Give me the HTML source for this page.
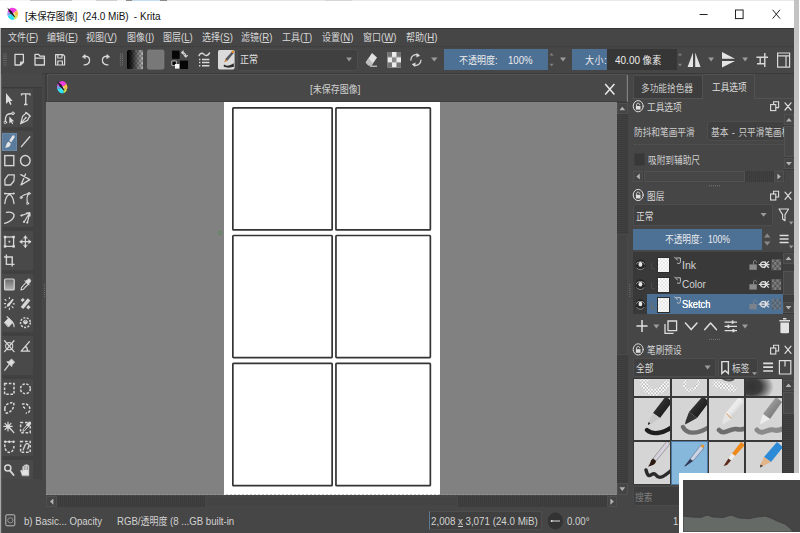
<!DOCTYPE html>
<html lang="zh-CN">
<head>
<meta charset="utf-8">
<title>[未保存图像] (24.0 MiB) - Krita</title>
<style>
*{box-sizing:border-box;margin:0;padding:0}
html,body{width:800px;height:533px;overflow:hidden;background:#fff}
body{font-family:"Liberation Sans","Noto Sans CJK SC",sans-serif;font-size:10px;color:#d2d2d2;position:relative;line-height:1}
.a{position:absolute}
.t{position:absolute;white-space:nowrap;line-height:12px;height:12px;font-size:10px;transform:scaleX(.9);transform-origin:0 0}
svg{position:absolute;overflow:visible}
#ic{left:0;top:0;pointer-events:none}
.l{font-size:107%}
.sl{background:#4d7095}
.combo{background:#404040;border:1px solid #4d4d4d;border-radius:2px}
.d{font-size:9.8px;transform:scaleX(.885);color:#cecece}
.m{top:31px;color:#d8d8d8}
.m u,.st u{text-decoration-thickness:1px;text-underline-offset:1px}
.sbv{background:#3d3d3d}
.sbb{background:#454545;border:1px solid #505050}
.sbt{background:#474747;border:1px solid #525252}
.th{width:13.4px;height:16px;background:#fff;border:1px solid #2c2c2c;background-image:conic-gradient(#e2e2e2 25%,#fff 0 50%,#e2e2e2 0 75%,#fff 0);background-size:3.4px 3.8px}
.ln{font-size:11px;color:#d2d2d2;transform:scaleX(.85)}
.bc{background:#d5d5d5}
.pn{border:1.3px solid #2a2a2a;border-radius:1.5px}
.tg{left:2px;width:31px;background:#494949}
</style>
</head>
<body>
<!-- window background -->
<div class="a" style="left:0;top:0;width:2px;height:533px;background:#a8a8a8"></div>
<div class="a" style="left:1px;top:0;width:794px;height:533px;background:#464646;border-left:1px solid #585858"></div>
<div class="a" style="left:0;top:0;width:800px;height:1px;background:linear-gradient(90deg,#f6f6f6 0 30px,#c4c4c4 30px 72px,#f4f4f4 72px 96px,#cfcfcf 96px 117px,#f4f4f4 117px 126px,#8a8a8a 126px 132px,#c4dcf2 132px 160px,#8a8a8a 160px 167px,#e6e6e6 167px 325px,#d6d6d6 325px 352px,#e8e8e8 352px)"></div>

<!-- TITLE BAR -->
<div class="a" id="title" style="left:0;top:1px;width:795px;height:27px;background:#fff"></div>
<div class="t" style="left:25px;top:9.7px;font-size:10.4px;color:#111"><span class="l">[</span>未保存图像<span class="l">]</span>&nbsp; <span class="l">(24.0 MiB)</span>&nbsp; <span class="l">- Krita</span></div>

<!-- MENU BAR -->
<div class="a" id="menu" style="left:1px;top:28px;width:794px;height:19px;background:#464646;border-top:1px solid #363636"></div>
<div class="t m" style="left:8px">文件<span class="l">(</span><u><span class="l">F</span></u><span class="l">)</span></div>
<div class="t m" style="left:47px">编辑<span class="l">(</span><u><span class="l">E</span></u><span class="l">)</span></div>
<div class="t m" style="left:86px">视图<span class="l">(</span><u><span class="l">V</span></u><span class="l">)</span></div>
<div class="t m" style="left:127px">图像<span class="l">(</span><u><span class="l">I</span></u><span class="l">)</span></div>
<div class="t m" style="left:163px">图层<span class="l">(</span><u><span class="l">L</span></u><span class="l">)</span></div>
<div class="t m" style="left:202px">选择<span class="l">(</span><u><span class="l">S</span></u><span class="l">)</span></div>
<div class="t m" style="left:241px">滤镜<span class="l">(</span><u><span class="l">R</span></u><span class="l">)</span></div>
<div class="t m" style="left:282px">工具<span class="l">(</span><u><span class="l">T</span></u><span class="l">)</span></div>
<div class="t m" style="left:322px">设置<span class="l">(</span><u><span class="l">N</span></u><span class="l">)</span></div>
<div class="t m" style="left:363px">窗口<span class="l">(</span><u><span class="l">W</span></u><span class="l">)</span></div>
<div class="t m" style="left:406px">帮助<span class="l">(</span><u><span class="l">H</span></u><span class="l">)</span></div>

<!-- TOOLBAR -->
<div class="a" id="tb" style="left:1px;top:46px;width:794px;height:28px;background:#464646;border-top:1px dotted #383838;border-bottom:1px solid #3b3b3b"></div>
<div class="a combo" style="left:237px;top:49px;width:121px;height:22px"></div>
<div class="t" style="left:240px;top:54px;color:#e0e0e0">正常</div>
<div class="a sl" style="left:444px;top:49px;width:104px;height:21px"></div>
<div class="t" style="left:458.5px;top:54px;color:#ececec">不透明度<span class="l">:</span></div>
<div class="t" style="left:507.5px;top:54px;color:#ececec"><span class="l">100%</span></div>
<div class="a" style="left:572px;top:49px;width:105px;height:21px;background:#363636"></div>
<div class="a sl" style="left:572px;top:49px;width:35px;height:21px"></div>
<div class="t" style="left:585px;top:54px;color:#ececec;letter-spacing:.5px">大小<span class="l">:</span></div>
<div class="t" style="left:615.2px;top:54px;color:#ececec;transform:scaleX(.935)"><span class="l">40.00</span> 像素</div>

<!-- TOOLBOX -->
<div class="a" style="left:2px;top:73px;width:40px;height:15px;background:#484848;border-bottom:1px solid #3a3a3a"></div>
<div class="a" style="left:2px;top:88px;width:40px;height:391px;background:#414141"></div>
<div class="a tg" style="top:89px;height:38px"></div>
<div class="a tg" style="top:131px;height:96px"></div>
<div class="a tg" style="top:231px;height:39px"></div>
<div class="a tg" style="top:274px;height:58px"></div>
<div class="a tg" style="top:336px;height:39px"></div>
<div class="a tg" style="top:379px;height:77px"></div>
<div class="a tg" style="top:460px;height:19px"></div>
<div class="a" style="left:2px;top:133px;width:15px;height:18px;background:#5a7b9c;border:1px solid #6888a8"></div>

<!-- CANVAS -->
<div class="a" id="canvas" style="left:46px;top:75px;width:582px;height:432px;background:#818181"></div>
<div class="a" style="left:45.4px;top:74px;width:2px;height:28px;background:#3d3d3d"></div>
<div class="a" style="left:46.6px;top:74px;width:580px;height:28px;background:#484848;border-radius:3px 0 0 0;border:1px solid #535353;border-bottom:1px solid #3e3e3e"></div>
<div class="t" style="left:309.6px;top:82.6px;color:#d0d0d0"><span class="l">[</span>未保存图像<span class="l">]</span></div>
<div class="a" id="doc" style="left:224px;top:102px;width:216px;height:393px;background:#fff"></div>
<!-- comic panels -->
<!-- canvas scrollbars -->
<div class="a sbv" id="vs" style="left:617px;top:102px;width:10.6px;height:393px;background:repeating-linear-gradient(0deg,#3b3b3b 0 1px,#404040 1px 2px)"></div>
<div class="a" style="left:617px;top:233.5px;width:10.6px;height:121px;background:#434343;border:1px solid #494949"></div>
<div class="a sbb" style="left:617px;top:102.6px;width:10.6px;height:11.4px"></div>
<div class="a sbb" style="left:617px;top:483.4px;width:10.6px;height:11.2px"></div>
<div class="a" style="left:46px;top:495px;width:582px;height:13px;background:#464646"></div>
<div class="a sbv" id="hs" style="left:46px;top:496px;width:571px;height:11px;background:repeating-linear-gradient(90deg,#3b3b3b 0 1px,#404040 1px 2px)"></div>
<div class="a sbb" style="left:46px;top:496px;width:11px;height:11px"></div>
<div class="a" style="left:205px;top:496px;width:252.5px;height:11px;background:#444;border:1px solid #474747"></div>
<div class="a sbb" style="left:607px;top:496px;width:10px;height:11px"></div>

<!-- STATUS -->
<div class="t st" style="left:24px;top:515.4px"><span class="l">b) Basic... Opacity</span></div>
<div class="t st" style="left:117px;top:515.4px"><span class="l">RGB/</span>透明度 <span class="l">(8 ...GB built-in</span></div>
<div class="a" style="left:429px;top:510.6px;width:113px;height:19.6px;background:#404040;border:1px solid #4e4e4e;border-left-color:#5d7894"></div>
<div class="t st" style="left:431px;top:515.4px;transform:scaleX(.915)"><span class="l">2,008</span> <u><span class="l">x</span></u> <span class="l">3,071 (24.0 MiB)</span></div>
<div class="t st" style="left:567px;top:515.4px"><span class="l">0.00°</span></div>
<div class="t st" style="left:673px;top:515.4px;letter-spacing:1.5px"><span class="l">100%</span></div>
<!-- RIGHT DOCK -->
<div class="a" style="left:633px;top:75px;width:70px;height:23px;background:#3d3d3d;border:1px solid #4e4e4e;border-bottom:none;border-radius:2px 2px 0 0"></div>
<div class="a" style="left:702px;top:74px;width:53px;height:25px;background:#454545;border:1px solid #525252;border-bottom:none;border-radius:2px 2px 0 0"></div>
<div class="a" style="left:632px;top:98px;width:71px;height:1px;background:#525252"></div>
<div class="a" style="left:755px;top:98px;width:40px;height:1px;background:#525252"></div>
<div class="t d" style="left:641px;top:83px;color:#c8c8c8">多功能拾色器</div>
<div class="t d" style="left:712.2px;top:82px;color:#dedede">工具选项</div>
<div class="t d" style="left:647.2px;top:102.2px;color:#d6d6d6">工具选项</div>
<div class="t d" style="left:634.2px;top:126.5px">防抖和笔画平滑</div>
<div class="a combo" style="left:707.4px;top:121px;width:77.4px;height:20px;overflow:hidden;border-radius:3px"><div class="t d" style="left:2.2px;top:4.6px;word-spacing:1.2px">基本 <span class="l">-</span> 只平滑笔画棱角</div></div>
<div class="a" style="left:634px;top:143.6px;width:150px;height:0;border-top:1px dotted #545454"></div>
<div class="a" style="left:634px;top:153px;width:11px;height:13px;background:#383838;border:1px solid #3f3f3f"></div>
<div class="t d" style="left:648.4px;top:155.2px">吸附到辅助尺</div>
<!-- tool options scrollbars -->
<div class="a sbv" style="left:784.4px;top:114px;width:10px;height:56px;background:repeating-linear-gradient(0deg,#3b3b3b 0 1px,#404040 1px 2px)"></div>
<div class="a sbb" style="left:784px;top:114px;width:10px;height:11px"></div>
<div class="a sbt" style="left:784px;top:126px;width:10px;height:31px"></div>
<div class="a sbb" style="left:784px;top:158px;width:10px;height:11px"></div>
<div class="a sbv" style="left:633px;top:171px;width:152px;height:11px;background:repeating-linear-gradient(90deg,#3b3b3b 0 1px,#404040 1px 2px)"></div>
<div class="a sbb" style="left:633px;top:171px;width:10px;height:11px"></div>
<div class="a sbt" style="left:644px;top:171px;width:101px;height:11px"></div>
<div class="a sbb" style="left:774px;top:171px;width:10px;height:11px"></div>

<!-- LAYERS -->
<div class="t d" style="left:646.6px;top:191.4px;color:#d6d6d6">图层</div>
<div class="a combo" style="left:633px;top:204px;width:140px;height:22px"></div>
<div class="t d" style="left:635.8px;top:210.6px;color:#dadada">正常</div>
<div class="a sl" style="left:633px;top:229px;width:129px;height:21px"></div>
<div class="t d" style="left:665px;top:234px;color:#ececec">不透明度<span class="l">:</span></div>
<div class="t d" style="left:707.8px;top:234px;color:#ececec;transform:scaleX(.82)"><span class="l">100%</span></div>
<div class="a" style="left:633px;top:252px;width:150px;height:62px;background:#393939"></div>
<div class="a" style="left:647px;top:294px;width:136px;height:20px;background:#4d7095"></div>
<div class="a th" style="left:657px;top:257px"></div>
<div class="a th" style="left:657px;top:277px"></div>
<div class="a th" style="left:657px;top:297px"></div>
<div class="t ln" style="left:682.2px;top:258.6px;transform:scaleX(.9)"><span class="l">Ink</span></div>
<div class="t ln" style="left:682.2px;top:278.4px"><span class="l">Color</span></div>
<div class="t ln" style="left:682.2px;top:298.2px;color:#fff;text-shadow:0 0 .5px #fff;transform:scaleX(.79)"><span class="l">Sketch</span></div>
<div class="a sbv" style="left:783px;top:252px;width:11.4px;height:62px;background:repeating-linear-gradient(0deg,#3b3b3b 0 1px,#404040 1px 2px)"></div>
<div class="a sbb" style="left:783px;top:253px;width:11px;height:11px"></div>
<div class="a sbt" style="left:783px;top:271px;width:11px;height:24px"></div>
<div class="a sbb" style="left:783px;top:302px;width:11px;height:11px"></div>

<!-- BRUSH PRESETS -->
<div class="t d" style="left:646.6px;top:345px;color:#d6d6d6">笔刷预设</div>
<div class="a combo" style="left:633px;top:358px;width:83px;height:19px"></div>
<div class="t d" style="left:635.8px;top:362.6px;color:#dadada">全部</div>
<div class="a combo" style="left:718px;top:358px;width:40px;height:19px"></div>
<div class="t d" style="left:732.2px;top:362.6px;color:#dadada">标签</div>
<div class="a" style="left:633px;top:378px;width:150px;height:107px;background:#383838"></div>
<div class="a bc" style="left:634px;top:379px;width:36px;height:17px"></div>
<div class="a bc" style="left:672px;top:379px;width:35px;height:17px"></div>
<div class="a bc" style="left:709px;top:379px;width:35px;height:17px"></div>
<div class="a bc" style="left:746px;top:379px;width:36px;height:17px"></div>
<div class="a bc" style="left:634px;top:398px;width:36px;height:42px"></div>
<div class="a bc" style="left:672px;top:398px;width:35px;height:42px"></div>
<div class="a bc" style="left:709px;top:398px;width:35px;height:42px"></div>
<div class="a bc" style="left:746px;top:398px;width:36px;height:42px"></div>
<div class="a bc" style="left:634px;top:442px;width:36px;height:42px"></div>
<div class="a bc" style="left:671px;top:441px;width:37px;height:44px;background:#86b8dc;border:1px solid #4f79a0"></div>
<div class="a bc" style="left:709px;top:442px;width:35px;height:42px"></div>
<div class="a bc" style="left:746px;top:442px;width:36px;height:42px"></div>
<div class="a sbv" style="left:782.6px;top:379px;width:11.8px;height:106px;background:repeating-linear-gradient(0deg,#3b3b3b 0 1px,#404040 1px 2px)"></div>
<div class="a sbb" style="left:783px;top:380px;width:11px;height:11px"></div>
<div class="a sbt" style="left:783px;top:392px;width:11px;height:22px"></div>
<div class="a" style="left:633px;top:486px;width:150px;height:20px;background:#3e3e3e;border:1px solid #4a4a4a;border-radius:2px"></div>
<div class="t d" style="left:634.8px;top:491.6px;color:#7e7e7e">搜索</div>
<svg id="ic" width="800" height="533" viewBox="0 0 800 533" fill="none">
<!-- TITLE + CANVAS ICONS -->
<g id="misc">
  <!-- comic panels -->
  <g fill="#fff" stroke="#343434" stroke-width="1.7">
    <rect x="232.85" y="107.85" width="99.3" height="122.05" rx="0.7"/>
    <rect x="335.95" y="107.85" width="94.4" height="122.05" rx="0.7"/>
    <rect x="232.85" y="235.5" width="99.3" height="122.05" rx="0.7"/>
    <rect x="335.95" y="235.5" width="94.4" height="122.05" rx="0.7"/>
    <rect x="232.85" y="363.3" width="99.3" height="122.3" rx="0.7"/>
    <rect x="335.95" y="363.3" width="94.4" height="122.3" rx="0.7"/>
  </g>
  <g id="krita-logo">
    <path d="M12.70 13.80 L7.48 12.22 A5.4 6.1 0 0 1 17.12 10.30 Z" fill="#ee3be0"/>
    <path d="M12.70 13.80 L17.12 10.30 A5.4 6.1 0 0 1 17.59 16.38 Z" fill="#f7bd48"/>
    <path d="M12.70 13.80 L17.59 16.38 A5.4 6.1 0 0 1 14.55 19.53 Z" fill="#cfe94a"/>
    <path d="M12.70 13.80 L14.55 19.53 A5.4 6.1 0 0 1 7.63 15.89 Z" fill="#2fe3ee"/>
    <path d="M12.70 13.80 L7.63 15.89 A5.4 6.1 0 0 1 7.48 12.22 Z" fill="#7f9ff0"/>
    <ellipse cx="13.30" cy="14.60" rx="1.6" ry="1.8" fill="#fff" opacity="0.55"/>
    <path d="M7.10 7.40 L11.70 11.20 L15.30 17.20 L13.90 16.80 L10.30 13.20 Z" fill="#1c1c28"/>
  </g>
  <g id="krita-logo2">
    <path d="M62.20 87.20 L57.18 85.62 A5.2 6.1 0 0 1 66.46 83.70 Z" fill="#ee3be0"/>
    <path d="M62.20 87.20 L66.46 83.70 A5.2 6.1 0 0 1 66.91 89.78 Z" fill="#f7bd48"/>
    <path d="M62.20 87.20 L66.91 89.78 A5.2 6.1 0 0 1 63.98 92.93 Z" fill="#cfe94a"/>
    <path d="M62.20 87.20 L63.98 92.93 A5.2 6.1 0 0 1 57.31 89.29 Z" fill="#2fe3ee"/>
    <path d="M62.20 87.20 L57.31 89.29 A5.2 6.1 0 0 1 57.18 85.62 Z" fill="#7f9ff0"/>
    <ellipse cx="62.80" cy="88.00" rx="1.6" ry="1.8" fill="#fff" opacity="0.55"/>
    <path d="M56.60 80.80 L61.20 84.60 L64.80 90.60 L63.40 90.20 L59.80 86.60 Z" fill="#1c1c28"/>
  </g>
  <g stroke="#222" stroke-width="1" fill="none">
    <path d="M699.6 14.5 H707.6"/><rect x="735.5" y="10" width="7.6" height="8.6"/><path d="M772.6 9.8 L780 18.6 M780 9.8 L772.6 18.6"/>
  </g>
  <path d="M605.2 84 L614.4 94.4 M614.4 84 L605.2 94.4" stroke="#eaeaea" stroke-width="1.5" fill="none"/>
  <g fill="#b4b4b4" stroke="none">
    <path d="M619.4 110.2 L622.3 106.8 L625.2 110.2 Z"/>
    <path d="M619.4 487.2 L622.3 491 L625.2 487.2 Z"/>
    <path d="M53.4 498.4 L50 501.6 L53.4 504.8 Z"/>
    <path d="M610.4 498.4 L613.8 501.6 L610.4 504.8 Z"/>
  </g>
  <!-- dock splitter grips -->
  <path d="M44.6 284 V298" stroke="#707070" stroke-width="1" stroke-dasharray="1 1" fill="none"/>
  <path d="M629.8 284 V298" stroke="#707070" stroke-width="1" stroke-dasharray="1 1" fill="none"/>
  <!-- toolbox separators -->
  <path d="M5.5 129.4 H29.5 M5.5 229.4 H29.5 M5.5 272.4 H29.5 M5.5 334.4 H29.5 M5.5 377.4 H29.5 M5.5 458.4 H29.5" stroke="#3a3a3a" stroke-width="0.9" stroke-dasharray="0.9 1.3" fill="none" opacity="0.8"/>
  <!-- canvas bottom dashed edge -->
  <path d="M46 494.5 H617" stroke="#a9a49c" stroke-width="1" stroke-dasharray="2 2" fill="none" opacity="0.6"/>
  <!-- green cursor dot -->
  <ellipse cx="219.8" cy="233" rx="1.6" ry="1.9" fill="none" stroke="#4f8a4f" stroke-width="0.8"/>
  <!-- status icons -->
  <rect x="5.8" y="514.8" width="9" height="11" rx="1" fill="none" stroke="#bdbdbd" stroke-width="1"/>
  <circle cx="10.3" cy="520.3" r="2.6" fill="none" stroke="#9a9a9a" stroke-width="0.9"/>
  <ellipse cx="555.4" cy="521" rx="7.6" ry="8.4" fill="#333"/>
  <path d="M551.4 521 H560" stroke="#ddd" stroke-width="1" fill="none"/><circle cx="551.6" cy="521" r="1" fill="#ddd"/>
</g>
<!-- TOOLBAR ICONS -->
<g id="toolbar-icons" stroke="#d8d8d8" stroke-width="1.3" fill="none" stroke-linejoin="round" stroke-linecap="round">
  <!-- drag handles -->
  <path d="M4 53.4 V66 M6 53.4 V66 M120.4 53.4 V66 M122.4 53.4 V66" stroke="#787878" stroke-width="1.1" stroke-dasharray="1.1 1.1" stroke-linecap="butt"/>
  <!-- new -->
  <path d="M15 54.4 H23.4 V62.2 L20.6 65 H15 Z M23.4 62.2 H20.6 V65" stroke-width="1.3"/>
  <!-- open -->
  <path d="M35 65 V54.4 H38.6 L40 56.2 H44.4 V65 Z M35 58.2 H44.4" stroke-width="1.3"/>
  <!-- save -->
  <path d="M55.6 54.6 H63 L64.6 56.2 V65 H55.6 Z M57.8 54.8 V58 H62 V54.8 M57.8 65 V61 H62.4 V65" stroke-width="1.2"/>
  <!-- undo -->
  <path d="M84.4 56.4 C88.6 55.6 90.4 59 89.4 61.8 C88.6 64 86.6 65 84.2 64.8" stroke-width="1.35"/>
  <path d="M82.4 56.8 L85 54.4 L85.4 58.4 Z" fill="#dedede" stroke-width="0.5"/>
  <!-- redo -->
  <path d="M107.6 56.4 C103.4 55.6 101.6 59 102.6 61.8 C103.4 64 105.4 65 107.8 64.8" stroke-width="1.35"/>
  <path d="M109.6 56.8 L107 54.4 L106.6 58.4 Z" fill="#dedede" stroke-width="0.5"/>
  <!-- gradient swatch -->
  <defs>
    <pattern id="chk" x="127" y="50" width="4" height="4.8" patternUnits="userSpaceOnUse" stroke="none"><rect width="4" height="4.8" fill="#8c8c8c"/><rect width="2" height="2.4" fill="#c4c4c4"/><rect x="2" y="2.4" width="2" height="2.4" fill="#c4c4c4"/></pattern>
    <linearGradient id="gsw" x1="0" y1="0" x2="1" y2="0"><stop offset="0" stop-color="#000" stop-opacity="1"/><stop offset="0.25" stop-color="#000" stop-opacity="0.85"/><stop offset="1" stop-color="#000" stop-opacity="0.05"/></linearGradient>
    <pattern id="chk2" x="387.4" y="52" width="9.06" height="10.4" patternUnits="userSpaceOnUse" stroke="none"><rect width="9.06" height="10.4" fill="#ececec"/><rect width="4.53" height="5.2" fill="#747474"/><rect x="4.53" y="5.2" width="4.53" height="5.2" fill="#8a8a8a"/></pattern>
  </defs>
  <rect x="127" y="50" width="16" height="19.2" rx="1.2" fill="url(#chk)" stroke="none"/>
  <rect x="127" y="50" width="16" height="19.2" rx="1.2" fill="url(#gsw)" stroke="none"/>
  <!-- pattern swatch -->
  <rect x="147.4" y="50" width="16.6" height="19.2" rx="1.6" fill="#787878" stroke="#858585" stroke-width="0.6"/>
  <!-- fg/bg colors -->
  <rect x="172" y="50.6" width="7.6" height="8.2" fill="#060606" stroke="none"/>
  <rect x="180" y="60.6" width="8" height="8.4" fill="#060606" stroke="none"/>
  <rect x="172.2" y="61" width="4.2" height="4.4" fill="#060606" stroke="#cfcfcf" stroke-width="0.8"/>
  <rect x="175" y="64" width="4.4" height="4.6" fill="#f4f4f4" stroke="none"/>
  <path d="M182 52.6 C184.6 52.6 185.8 54 185.8 56.6 M181.6 52.6 L183.4 51 M181.6 52.6 L183.4 54.2 M185.8 57 L184.2 55.4 M185.8 57 L187.4 55.4" stroke-width="1.1"/>
  <!-- brush settings -->
  <path d="M199 55.6 C200.6 52.4 202.6 52.8 204 54.4 C205.6 56.2 207.6 56 209.6 53" stroke-width="1.4"/>
  <path d="M202 59.6 H209.4 M202 62.6 H209.4 M202 65.8 H209.4" stroke-width="1.5" stroke-linecap="butt"/>
  <path d="M199 59.6 H200.4 M199 62.6 H200.4 M199 65.8 H200.4" stroke-width="1.5" stroke-linecap="butt"/>
  <!-- brush preset thumbnail -->
  <rect x="218" y="50" width="16.6" height="19.4" rx="1.6" fill="#dadada" stroke="none"/>
  <path d="M224 64.6 C226 66.4 230 66 233.6 63.2 L234 66.8 C230 68 226 68 223.6 66.2 Z" fill="#2c2c2c" stroke="none"/>
  <path d="M224.6 62 L225.6 58.8 L232 51.6 L233.8 53 L227.6 60.6 Z" fill="#55565e" stroke="none"/>
  <path d="M225.4 59 L227.4 60.6 L224.4 62.4 Z" fill="#d98b3a" stroke="none"/>
  <circle cx="232.8" cy="51.8" r="1.3" fill="#e58a1e" stroke="none"/>
  <!-- combo arrow -->
  <path d="M346.2 57.6 H352 L349.1 61.4 Z" fill="#9a9a9a" stroke="none"/>
  <!-- eraser -->
  <path d="M365.6 62.4 L372 53 L377 57.6 L371.6 65.4 H368.4 Z" fill="#e2e2e2" stroke="none"/>
  <path d="M365.8 62.2 L368.6 65.2 H371.6 L373 63.2 L368.6 58.2 Z" fill="#bdbdbd" stroke="none"/>
  <path d="M370 66.2 H377" stroke-width="1.1" stroke-linecap="butt"/>
  <!-- preserve alpha -->
  <rect x="387.4" y="52" width="13.6" height="15.6" fill="url(#chk2)" stroke="none"/>
  <!-- reload preset -->
  <path d="M410.8 60 C410.8 56 414.6 53.4 418.4 55.2 M421 60 C421 64 417.2 66.6 413.4 64.8" stroke-width="1.25"/>
  <path d="M417 53.4 L419.8 55.8 L416.6 57 Z M414.8 66.6 L412 64.2 L415.2 63 Z" fill="#dedede" stroke-width="0.4"/>
  <!-- dropdown arrows -->
  <g fill="#9c9c9c" stroke="none">
    <path d="M431 57.6 H437.6 L434.3 61.6 Z"/>
    <path d="M560 57.6 H566 L563 61.6 Z"/>
    <path d="M708.2 57.6 H714 L711.1 61.4 Z"/>
    <path d="M742.2 57.6 H748 L745.1 61.4 Z"/>
    <!-- spinners -->
    <path d="M549.6 55.6 H553.6 L551.6 53 Z M549.6 63.8 H553.6 L551.6 66.4 Z" fill="#808080"/>
    <path d="M678 55.6 H682 L680 53 Z M678 63.8 H682 L680 66.4 Z" fill="#808080"/>
  </g>
  <!-- mirror H -->
  <path d="M693 52.6 V67 H687.6 Z M695.2 52.6 V67 H700.6 Z" fill="#e4e4e4" stroke="none"/>
  <!-- mirror V -->
  <path d="M722 52 V58.8 H735 Z M722 61 V67.6 L735 61 Z" fill="#e4e4e4" stroke="none"/>
  <!-- wrap around -->
  <path d="M756.4 57.2 H768 M764.8 53 V67 M760.2 57.4 V63.8 M757 63.8 H764.8" stroke-width="1.4" stroke-linecap="butt" stroke-linejoin="miter"/>
  <!-- workspace -->
  <path d="M777.6 53 H789.6 V67.2 H777.6 Z M777.6 55.8 H789.6 M786 55.8 V67.2" stroke-width="1.2" stroke-linejoin="miter"/>
</g>
<!-- TOOLBOX ICONS -->
<g id="toolbox-icons" stroke="#d6d6d6" stroke-width="1.3" fill="none" stroke-linejoin="round" stroke-linecap="round">
  <!-- row 1 : pointer, text -->
  <path d="M6 93 V104 L8.6 101.6 L10.2 105 L11.6 104.3 L10.1 101.1 L12.6 101 Z" fill="#dcdcdc" stroke="none"/>
  <path d="M21.5 95.6 V93.8 H30 V95.6 M25.75 93.8 V104.4 M24 104.5 H27.5" stroke-width="1.35" stroke-linecap="butt"/>
  <!-- row 2 : edit shapes, calligraphy -->
  <path d="M5.5 121.5 C5 116 6.5 113.5 12 113.5" />
  <circle cx="5.4" cy="122.3" r="1.3" stroke-width="1"/><circle cx="13" cy="113.3" r="1.3" stroke-width="1"/>
  <path d="M9.3 116.5 V123.5 L11 122 L12.3 124.2 L13.2 123.7 L12 121.5 L14 121.3 Z" fill="#dcdcdc" stroke="none"/>
  <path d="M20.6 123.8 L22.6 116.2 L26.6 112.6 L30 115.6 L27.4 120.4 Z M20.8 123.6 L25.4 118.2 M25.7 112.4 L30.3 116.4" stroke-width="1.2"/>
  <circle cx="25.9" cy="117.6" r="0.9" fill="#dcdcdc" stroke="none"/>
  <!-- row 3 : brush (selected), line -->
  <path d="M13.6 135.3 C14.8 135.6 14.9 137 14.2 138 L11.2 142.2 L9.2 140.8 L12 136.2 C12.4 135.5 13 135.2 13.6 135.3 Z M8.6 141.8 L10.6 143.2 C10.8 146 8.4 148 5 147.6 C6.6 146.2 6 143 8.6 141.8 Z" fill="#e6e6e6" stroke="none"/>
  <path d="M21.4 146.6 L29.8 136.8" stroke-width="1.4"/>
  <!-- row 4 : rect, ellipse -->
  <rect x="4.8" y="155.6" width="9" height="10" stroke-width="1.4" stroke-linejoin="miter"/>
  <ellipse cx="25.3" cy="160.6" rx="4.8" ry="5.1" stroke-width="1.4"/>
  <!-- row 5 : polygon, polyline -->
  <path d="M4.8 179.6 L8.2 174.8 H14.3 L13.9 181 L10.6 185 H5 Z" stroke-width="1.3"/>
  <path d="M25.6 174 L21 185 L29.8 179.6 L20.8 174.6" stroke-width="1.3"/>
  <!-- row 6 : bezier, freehand path -->
  <path d="M4.8 203.6 C5.4 198 7 195.4 9.4 194.4 C11.8 195.4 13.4 198 14 203.6 M5.4 193.6 H13.4" stroke-width="1.2"/>
  <circle cx="5" cy="193.6" r="1" fill="#dcdcdc" stroke="none"/><circle cx="13.8" cy="193.6" r="1" fill="#dcdcdc" stroke="none"/><circle cx="9.4" cy="194" r="1" fill="#dcdcdc" stroke="none"/>
  <path d="M21 197.6 C22 194.6 26 194.4 29 193.4 C26.6 196 26.6 199.4 27.6 203" stroke-width="1.2"/>
  <circle cx="21.2" cy="197.6" r="1.1" stroke-width="0.9"/><circle cx="29.2" cy="193.4" r="1.1" stroke-width="0.9"/><circle cx="27.6" cy="203.4" r="1.1" stroke-width="0.9"/>
  <!-- row 7 : dynamic brush, multibrush -->
  <path d="M6.4 212.4 C12 211.6 15.6 213.8 13.4 217.6 C11.6 220.6 8 222.4 4.6 223.4" stroke-width="1.3"/>
  <path d="M21 215.6 L29.6 212.8 M24 222.2 L29.6 212.8 M27.4 222.8 L29.6 212.8 M26.4 213 L29.8 212.6 L30 216" stroke-width="1.2"/>
  <circle cx="21.6" cy="215.6" r="1" fill="#dcdcdc" stroke="none"/><circle cx="24" cy="221.8" r="1" fill="#dcdcdc" stroke="none"/><circle cx="27.2" cy="222.6" r="1" fill="#dcdcdc" stroke="none"/>
  <!-- row 8 : transform, move -->
  <rect x="5" y="237" width="8.6" height="9.4" stroke-width="1.3" stroke-linejoin="miter"/>
  <g fill="#dcdcdc" stroke="none"><rect x="3.8" y="235.8" width="2.4" height="2.4"/><rect x="12.4" y="235.8" width="2.4" height="2.4"/><rect x="3.8" y="245.2" width="2.4" height="2.4"/><rect x="12.4" y="245.2" width="2.4" height="2.4"/><rect x="8.5" y="240.8" width="1.7" height="1.7"/></g>
  <path d="M25.4 236.2 V247.2 M20.2 241.7 H30.6" stroke-width="1.3"/>
  <path d="M23.6 238 L25.4 235.8 L27.2 238 Z M23.6 245.4 L25.4 247.6 L27.2 245.4 Z M22 239.9 L19.8 241.7 L22 243.5 Z M28.8 239.9 L31 241.7 L28.8 243.5 Z" fill="#dcdcdc" stroke-width="0.5"/>
  <!-- row 9 : crop -->
  <path d="M6.4 254.6 V264.4 H14.6 M4 257 H12.2 V266.6" stroke-width="1.4" stroke-linecap="butt" stroke-linejoin="miter"/>
  <!-- row 10 : gradient, color picker -->
  <defs><linearGradient id="gtool" x1="0" y1="0" x2="0" y2="1"><stop offset="0" stop-color="#6a6a6a"/><stop offset="1" stop-color="#b4b4b4"/></linearGradient></defs>
  <rect x="4.6" y="279" width="9.6" height="11" rx="1" fill="url(#gtool)" stroke-width="1.2"/>
  <path d="M21 290 L21.6 287.4 L26.4 282 L28.4 284 L23.4 289.2 Z" stroke-width="1.1"/>
  <path d="M25.8 281.4 L27.6 279.6 C28.4 278.8 29.6 278.8 30.2 279.6 C30.8 280.4 30.8 281.4 30 282.2 L28.4 284.2 Z M25 280.6 L29.4 285" fill="#dcdcdc" stroke-width="1"/>
  <!-- row 11 : colorize mask, smart patch -->
  <path d="M7 306.6 C6.6 304.6 7.6 303.6 9 302.8 L12.6 298.8 L13.8 299.8 L10.4 304.4 C9.8 306 8.6 306.8 7 306.6 Z" fill="#dcdcdc" stroke="none"/>
  <path d="M5 299.4 L6 300.4 M4.4 303.6 H5.6 M9.4 297.6 V298.6 M13.2 303.8 H14.4 M12 306.6 L13 307.6 M9.4 308.4 V309.4 M5 307.6 L6 306.8" stroke-width="1.2"/>
  <path d="M22 308 L29 299.4" stroke-width="3.4" stroke-linecap="butt"/>
  <path d="M21.8 299 L23.6 301 M27.4 306.2 L29.4 308.4" stroke-width="3.2" stroke-linecap="butt"/>
  <!-- row 12 : fill, enclose and fill -->
  <path d="M4.6 322.4 L8.8 318 L13 322.2 L8.6 326.8 Z" fill="#dcdcdc" stroke-width="1"/>
  <path d="M7 316.6 L9.6 319.6 M12.4 322.6 C13.6 323.4 14.2 324.6 14 326.6" stroke-width="1.2"/>
  <circle cx="25.4" cy="322.6" r="4.9" stroke-width="1.5" stroke-dasharray="2 1.4" stroke-linecap="butt"/>
  <path d="M23.4 322 A2 2 0 0 0 27.4 322 Z" fill="#dcdcdc" stroke-width="0.8"/>
  <path d="M23.4 321.4 A2 1.2 0 0 1 27.4 321.4" stroke-width="0.9"/>
  <!-- row 13 : assistant, measure -->
  <circle cx="9.2" cy="346.2" r="3.6" stroke-width="1.1"/>
  <path d="M4.6 340.8 L14 351.6 M14 340.8 L4.6 351.6" stroke-width="1.3"/>
  <path d="M29.4 341.6 L21.2 351.2 H29.6 M27.4 351 C27.6 348.6 26.6 347 25.2 346.4" stroke-width="1.3"/>
  <!-- row 14 : reference (pin) -->
  <path d="M9 361.4 L11.6 359 L14.6 362.2 L12.2 364.6 L11.8 366.6 L7 362 Z" fill="#dcdcdc" stroke-width="0.8"/>
  <path d="M9 364.6 L4.8 370.2" stroke-width="1.3"/>
  <!-- row 15 : rect select, ellipse select -->
  <rect x="4.6" y="383.6" width="9.4" height="10.6" stroke-width="1.5" stroke-dasharray="2.6 1.6" stroke-linecap="butt" stroke-linejoin="miter"/>
  <circle cx="25.4" cy="388.8" r="4.9" stroke-width="1.5" stroke-dasharray="2.4 1.5" stroke-linecap="butt"/>
  <!-- row 16 : polygon select, freehand select -->
  <path d="M4.8 408.6 C5 405 8 402.4 13.8 402.6 C14.4 406.6 12 412.4 6.4 413.2 C5.2 412.4 4.8 410.6 4.8 408.6 Z" stroke-width="1.5" stroke-dasharray="2.6 1.5" stroke-linecap="butt"/>
  <path d="M22 404.4 C26 402.6 30.4 405.6 29.8 410 C29.4 412.4 27.6 413.4 25.8 413 M25 408.6 C24.2 407.2 23 406.8 21.6 407.2" stroke-width="1.5" stroke-dasharray="2.6 1.4" stroke-linecap="butt"/>
  <!-- row 17 : contiguous select, similar select -->
  <path d="M9.6 427.6 L13.8 432.6" stroke-width="1.4"/>
  <path d="M8 422 V431 M3.8 426.4 H12.2 M5 423.4 L11 429.6 M11 423.4 L5 429.6" stroke-width="1.2"/>
  <circle cx="8" cy="426.4" r="2" fill="#dcdcdc" stroke="none"/>
  <rect x="20.6" y="422.4" width="9.6" height="10.4" stroke-width="1.5" stroke-dasharray="2.6 1.8" stroke-linecap="butt" stroke-linejoin="miter"/>
  <path d="M23 431 L23.4 429.2 L27 425 L28.4 426.4 L24.8 430.4 Z" stroke-width="1"/>
  <path d="M26.6 424.4 L28.2 422.6 C28.8 422 29.8 422 30.2 422.6 C30.8 423.4 30.6 424.2 30 424.8 L28.6 426.4 Z" fill="#dcdcdc" stroke-width="0.9"/>
  <!-- row 18 : bezier select, magnetic select -->
  <path d="M4.8 444.4 C4.6 449.4 6.6 452.4 9.4 452.4 C12.2 452.4 14.2 449.4 14 444.4" stroke-width="1.5" stroke-dasharray="2.6 1.5" stroke-linecap="butt"/>
  <path d="M5.2 441.8 H13.4" stroke-width="1.1"/>
  <circle cx="5.2" cy="441.8" r="1.2" fill="#dcdcdc" stroke="none"/><circle cx="9.3" cy="441.8" r="1.2" fill="#dcdcdc" stroke="none"/><circle cx="13.6" cy="441.8" r="1.2" fill="#dcdcdc" stroke="none"/>
  <rect x="20.6" y="441.4" width="9.6" height="10.8" stroke-width="1.5" stroke-dasharray="2.6 1.8" stroke-linecap="butt" stroke-linejoin="miter"/>
  <path d="M23.2 449.8 L25 445.2 C26 442.6 29.6 443.4 28.8 446 L27.8 448.8" stroke-width="1.3"/>
  <!-- row 19 : zoom, pan -->
  <circle cx="7.8" cy="468" r="3.1" stroke-width="1.5"/>
  <path d="M10.2 470.8 L13.6 475" stroke-width="1.9"/>
  <path d="M22.2 475.4 L20.6 470.6 L21.6 470 L22.8 471.4 V466.4 H24.2 V465.2 H25.8 V464.8 H27.4 V465.6 H28.8 V475.4 Z" fill="#e2e2e2" stroke-width="0.6"/>
  <path d="M24.3 466.2 V470 M25.9 465.6 V470 M27.5 466 V470" stroke="#5a5a5a" stroke-width="0.5" stroke-linecap="butt"/>
</g>
<!-- DOCK ICONS -->
<g id="dock-icons" stroke="#dedede" stroke-width="1.2" fill="none" stroke-linejoin="round" stroke-linecap="round">
  <defs>
    <g id="lockic"><ellipse cx="5.4" cy="6" rx="5" ry="5.6" stroke-width="1"/><rect x="3.1" y="5.8" width="4.6" height="3.6" fill="#dedede" stroke="none"/><path d="M3.8 5.8 V4.4 C3.8 2.6 7 2.6 7 4.4" stroke-width="0.9"/></g>
    <g id="floatic"><path d="M3.6 3.4 V0.8 H8.6 V6.6 H6" stroke-width="1.1" stroke-linejoin="miter"/><rect x="0.6" y="3.6" width="5.2" height="6" stroke-width="1.1" stroke-linejoin="miter"/></g>
    <g id="closeic"><path d="M0.4 0.4 L6.4 7.6 M6.4 0.4 L0.4 7.6" stroke-width="1.2"/></g>
    <g id="eyeic" stroke="none"><ellipse cx="5" cy="5.6" rx="5.2" ry="5.6" fill="#262626"/><path d="M0.3 6.2 C0.6 0.6 9.4 0.6 9.7 6.2 C8.6 3.4 6.8 2.6 5 2.6 C3.2 2.6 1.4 3.4 0.3 6.2 Z" fill="#dcdcdc"/><ellipse cx="5" cy="5" rx="1.9" ry="2.3" fill="#e8e8e8"/><path d="M1.4 8.6 C3 11 7 11 8.6 8.6" fill="none" stroke="#9a9a9a" stroke-width="1"/></g>
    <g id="lstyle"><path d="M2.6 1.4 H6.4 V5.2 C6.4 7 4.6 7.4 3.4 6.6 M0.6 0.6 L3.4 3.6" stroke="#cfcfcf" stroke-width="0.9"/></g>
    <g id="lkic"><rect x="0.2" y="5" width="7.4" height="5.4" fill="#8a8a8a" stroke="none"/><path d="M4.4 5 V2.6 C4.4 0.4 7.4 0.6 7.4 2.8" stroke="#8a8a8a" stroke-width="1"/></g>
    <g id="alic"><ellipse cx="4.2" cy="4.4" rx="2.6" ry="2.8" stroke-width="1.3"/><path d="M6.4 1.6 C7 4 7.6 6.4 9.6 7.2 M9.4 1.4 C8 2.6 7 5 5.6 7.4 M0.2 4.4 H10" stroke-width="1.2"/></g>
    <pattern id="chk3" width="4.8" height="5.4" patternUnits="userSpaceOnUse" stroke="none"><rect width="4.8" height="5.4" fill="#555"/><rect width="2.4" height="2.7" fill="#808080"/><rect x="2.4" y="2.7" width="2.4" height="2.7" fill="#808080"/></pattern>
    <g id="chkic"><rect width="9.6" height="10.8" fill="url(#chk3)" stroke="none"/></g>
    <path id="sbu" d="M0 3.4 L2.9 0 L5.8 3.4 Z" fill="#b4b4b4" stroke="none"/>
    <path id="sbd" d="M0 0 L2.9 3.4 L5.8 0 Z" fill="#b4b4b4" stroke="none"/>
    <path id="sbl" d="M3.4 0 L0 3 L3.4 6 Z" fill="#b4b4b4" stroke="none"/>
    <path id="sbr" d="M0 0 L3.4 3 L0 6 Z" fill="#b4b4b4" stroke="none"/>
    <path id="dd" d="M0 0 H6 L3 3.8 Z" fill="#9c9c9c" stroke="none"/>
  </defs>
  <!-- docker headers -->
  <use href="#lockic" x="632.8" y="100.2"/><use href="#floatic" x="770" y="101"/><use href="#closeic" x="784.6" y="102.4"/>
  <use href="#lockic" x="632.8" y="189"/><use href="#floatic" x="770" y="190.4"/><use href="#closeic" x="784.6" y="191.8"/>
  <use href="#lockic" x="632.8" y="343.4"/><use href="#floatic" x="770" y="344.4"/><use href="#closeic" x="784.6" y="345.8"/>
  <!-- splitter dots -->
  <path d="M709 185.8 H720 M709 339.4 H720" stroke="#7a7a7a" stroke-width="1" stroke-dasharray="1 1" stroke-linecap="butt"/>
  <!-- scroll arrows (tool options) -->
  <use href="#sbu" x="786" y="118"/><use href="#sbd" x="786" y="162"/>
  <use href="#sbl" x="636.4" y="173.6"/><use href="#sbr" x="777.4" y="173.6"/>
  <!-- layers combos -->
  <use href="#dd" x="760.6" y="213"/>
  <path d="M779 209 H788.6 L785 214.6 V220.8 L782.6 219 V214.6 Z" stroke-width="1.1"/>
  <path d="M789 221.4 H793.4 L791.2 224.4 Z" fill="#9c9c9c" stroke="none"/>
  <path d="M764 237.6 H770.4 L767.2 233.6 Z M764 241.6 H770.4 L767.2 245.6 Z" fill="#8a8a8a" stroke="none"/>
  <path d="M779.6 235.4 H788.6 M779.6 239 H788.6 M779.6 242.6 H788.6" stroke-width="1.5" stroke-linecap="butt"/>
  <path d="M789 245.4 H793.4 L791.2 248.4 Z" fill="#9c9c9c" stroke="none"/>
  <!-- layer rows -->
  <use href="#eyeic" x="635.4" y="259.4"/><use href="#eyeic" x="635.4" y="279.2"/><use href="#eyeic" x="635.4" y="299"/>
  <path d="M651.6 263 V268.6 H654.4 M651.6 283 V288.6 H654.4" stroke="#4c4c4c" stroke-width="1"/>
  <path d="M651.6 302.6 V308.4 H654.4" stroke="#7a7060" stroke-width="1"/>
  <use href="#lstyle" x="674" y="256.6"/><use href="#lstyle" x="674" y="276.4"/><use href="#lstyle" x="674" y="296.2"/>
  <use href="#lkic" x="749.2" y="259.4"/><use href="#lkic" x="749.2" y="279.2"/><use href="#lkic" x="749.2" y="299" opacity="0.75"/>
  <use href="#alic" x="759" y="260.2"/><use href="#alic" x="759" y="280"/><use href="#alic" x="759" y="299.8"/>
  <use href="#chkic" x="771.6" y="259.4"/><use href="#chkic" x="771.6" y="279.2"/><use href="#chkic" x="771.6" y="299" opacity="0.6"/>
  <use href="#sbu" x="785.6" y="256.6"/><use href="#sbd" x="785.6" y="306"/>
  <!-- layer toolbar -->
  <path d="M636.4 326 H647.6 M642 320 V332" stroke-width="1.5" stroke-linecap="butt"/>
  <use href="#dd" x="653.4" y="324.6"/>
  <path d="M668 321 H676.6 V330.6 H668 Z" stroke-width="1.3" stroke-linejoin="miter"/>
  <path d="M665 324 V333.4 H673.6" stroke-width="1.3" stroke-linejoin="miter" stroke-linecap="butt"/>
  <path d="M685.4 323 L691.2 329.6 L697 323" stroke-width="1.5"/>
  <path d="M704.8 329.6 L710.6 323 L716.4 329.6" stroke-width="1.5"/>
  <path d="M724.6 322.2 H737 M724.6 326.4 H737 M724.6 330.6 H737" stroke-width="1.3" stroke-linecap="butt"/>
  <path d="M732.6 320.6 V323.8 M728.4 324.8 V328 M733.4 329 V332.2" stroke-width="1.8" stroke-linecap="butt"/>
  <use href="#dd" x="742" y="324.6"/>
  <path d="M780.4 322.6 H789 V332 C789 332.8 788.6 333.2 787.8 333.2 H781.6 C780.8 333.2 780.4 332.8 780.4 332 Z" fill="#e2e2e2" stroke="none"/>
  <path d="M779.4 320.8 H790 M783 318.8 H786.4" stroke-width="1.6" stroke-linecap="butt"/>
  <!-- presets row -->
  <use href="#dd" x="704.6" y="365.6"/>
  <path d="M721.8 361.6 H728.4 V373.4 L725.1 370.6 L721.8 373.4 Z" stroke-width="1.4" stroke-linejoin="miter"/>
  <path d="M752 372.2 H757 L754.5 375.2 Z" fill="#9c9c9c" stroke="none"/>
  <path d="M763.2 363.4 H773 M763.2 367.2 H773 M763.2 371 H773" stroke-width="1.7" stroke-linecap="butt"/>
  <path d="M779.4 360.6 H790.8 V374 H779.4 Z M785 360.6 V366.4" stroke-width="1.2" stroke-linejoin="miter" stroke-linecap="butt"/>
  <use href="#sbu" x="785.6" y="383.6"/>
</g>
<!-- BRUSH THUMBNAILS -->
<g id="brushes" stroke="none">
  <defs>
    <pattern id="chk4" width="3.2" height="3.6" patternUnits="userSpaceOnUse" stroke="none"><rect width="3.2" height="3.6" fill="#fff"/><rect width="1.6" height="1.8" fill="#bdbdbd"/><rect x="1.6" y="1.8" width="1.6" height="1.8" fill="#bdbdbd"/></pattern>
    <radialGradient id="airg" cx="0.15" cy="0.45" r="0.62" gradientTransform="scale(1 1.6) translate(0 -0.17)"><stop offset="0" stop-color="#333"/><stop offset="0.45" stop-color="#3c3c3c"/><stop offset="0.75" stop-color="#8a8a8a"/><stop offset="1" stop-color="#d4d4d4"/></radialGradient>
    <linearGradient id="pbody" x1="0" y1="0" x2="1" y2="1"><stop offset="0" stop-color="#555"/><stop offset="0.45" stop-color="#2a2a2a"/><stop offset="1" stop-color="#111"/></linearGradient>
    <linearGradient id="wbody" x1="0" y1="0" x2="1" y2="1"><stop offset="0" stop-color="#fff"/><stop offset="0.5" stop-color="#e8e8e8"/><stop offset="1" stop-color="#9a9a9a"/></linearGradient>
    <linearGradient id="gbody" x1="0" y1="0" x2="1" y2="1"><stop offset="0" stop-color="#bbb"/><stop offset="0.5" stop-color="#8c8c8c"/><stop offset="1" stop-color="#666"/></linearGradient>
    <clipPath id="c00"><rect x="634" y="379" width="36" height="17"/></clipPath>
    <clipPath id="c01"><rect x="672" y="379" width="35" height="17"/></clipPath>
    <clipPath id="c02"><rect x="709" y="379" width="35" height="17"/></clipPath>
    <clipPath id="c10"><rect x="634" y="398" width="36" height="42"/></clipPath>
    <clipPath id="c11"><rect x="672" y="398" width="35" height="42"/></clipPath>
    <clipPath id="c12"><rect x="709" y="398" width="35" height="42"/></clipPath>
    <clipPath id="c13"><rect x="746" y="398" width="36" height="42"/></clipPath>
    <clipPath id="c20"><rect x="634" y="442" width="36" height="42"/></clipPath>
    <clipPath id="c21"><rect x="672" y="442" width="35" height="42"/></clipPath>
    <clipPath id="c22"><rect x="709" y="442" width="35" height="42"/></clipPath>
    <clipPath id="c23"><rect x="746" y="442" width="36" height="42"/></clipPath>
  </defs>
  <!-- row 0 -->
  <g clip-path="url(#c00)"><path d="M647 376 C642 380 643 390 652 392 C658 393 664 389 666 384" fill="none" stroke="url(#chk4)" stroke-width="7" stroke-linecap="round"/></g>
  <g clip-path="url(#c01)"><path d="M686 381 C682 386 686 391 691 390 C695 389 698 385 699 381" fill="none" stroke="url(#chk4)" stroke-width="3" stroke-linecap="round"/></g>
  <g clip-path="url(#c02)"><path d="M716 384 C722 386 728 386 733 389" fill="none" stroke="url(#chk4)" stroke-width="7" stroke-linecap="round"/><path d="M722 378 C726 381 730 381 734 379" fill="none" stroke="#555" stroke-width="2"/></g>
  <rect x="746" y="379" width="36" height="17" fill="#d4d4d4"/><rect x="746" y="379" width="36" height="17" fill="url(#airg)"/>
  <!-- row 1 -->
  <g clip-path="url(#c10)">
    <path d="M647 430 C652 435 662 434 672 427" fill="none" stroke="#1e1e1e" stroke-width="4.4" stroke-linecap="round"/>
    <path d="M666 396 L672 402 L660 418 L653 413 Z" fill="url(#pbody)"/>
    <path d="M653 413 L660 418 L651 424 L648 425 L648.4 422 Z" fill="#c8c8c8"/><path d="M648 425 L648.4 422 L650.4 423.6 Z" fill="#222"/>
  </g>
  <g clip-path="url(#c11)">
    <path d="M683 427 C687 435 698 434 709 427" fill="none" stroke="#555" stroke-width="4.4" stroke-linecap="round" opacity="0.8"/>
    <path d="M703 396 L709 402 L697 418 L689 412 Z" fill="url(#pbody)"/>
    <path d="M689 412 L697 418 L688 423 L685 424.6 L685.6 421 Z" fill="#333"/>
  </g>
  <g clip-path="url(#c12)">
    <path d="M719 430 C724 436 730 428 736 429 C740 430 742 430 746 428" fill="none" stroke="#5a5a5a" stroke-width="4.6" stroke-linecap="round" opacity="0.85"/>
    <path d="M739 397 L745 402 L732 419 L725 414 Z" fill="url(#wbody)"/>
    <path d="M725 414 L732 419 L724 423.6 L722 424 L722.6 421 Z" fill="#e4e4e4"/><path d="M726.6 413.4 L731 418.6" stroke="#e89040" stroke-width="0.9"/>
  </g>
  <g clip-path="url(#c13)">
    <path d="M757 430 C762 436 768 428 774 430 C778 431 780 430 784 428" fill="none" stroke="#777" stroke-width="5" stroke-linecap="round" opacity="0.8"/>
    <path d="M776 397 L782 402 L770 419 L763 414 Z" fill="url(#gbody)"/>
    <path d="M763 414 L770 419 L762 423.6 L760 424 L760.6 421 Z" fill="#ececec"/>
  </g>
  <!-- row 2 -->
  <g clip-path="url(#c20)">
    <path d="M646 470 C649 482 652 470 656 475 C660 481 666 474 672 470" fill="none" stroke="#2a2a2a" stroke-width="3.4" stroke-linecap="round"/>
    <path d="M667 441 L670 444 L656 461 L653 458.6 Z" fill="#d6d0dc" stroke="#666" stroke-width="0.5"/>
    <path d="M653 458.6 L656 461 C656 464 652 466 648 466.4 C651 464 650 460 653 458.6 Z" fill="#2a1a12"/>
  </g>
  <g clip-path="url(#c21)">
    <path d="M701 445 L704 448 L693 461 L690 459 Z" fill="#c9d4e6" stroke="#556" stroke-width="0.5"/>
    <circle cx="702.6" cy="446" r="1.6" fill="#e8962e"/>
    <path d="M690 459 L693 461 L686 466 L684 466.4 Z" fill="#333a55"/>
  </g>
  <g clip-path="url(#c22)">
    <path d="M741 442 L745 445 L735 456 L732 453.6 Z" fill="#ee8a1c"/>
    <path d="M732 453.6 L735 456 L731 460.6 L728.4 458.6 Z" fill="#eee"/>
    <path d="M728.4 458.6 L731 460.6 L727 465 L723.6 466 Z" fill="#5a2a1a"/>
  </g>
  <g clip-path="url(#c23)">
    <path d="M777 442 L783 447 L771 462 L764 457 Z" fill="#2c8ad6"/>
    <path d="M764 457 L771 462 L762 466.6 L760 467.4 L760.6 464 Z" fill="#e2b48a"/><path d="M760 467.4 L760.6 464.4 L763 466 Z" fill="#333"/>
  </g>
</g>
</svg>
<!-- right edge strip + overlay box -->
<div class="a" style="left:794.4px;top:0;width:6px;height:533px;background:#c3c3c3;border-right:1px solid #fff"></div>
<div class="a" style="left:679px;top:473px;width:121px;height:60px;background:#fff"></div>
<div class="a" style="left:683.2px;top:480px;width:117px;height:51.8px;background:#454545;overflow:hidden">
  <svg width="117" height="52" viewBox="0 0 117 52" style="left:0;top:0"><path d="M0 36 L8 37 L18 37.4 L24 35 L30 37 L40 37.6 L48 35 L56 38 L66 38.6 L74 37 L82 36 L88 38 L94 41 L102 44 L108 49 L110 52 L0 52 Z" fill="#666a66" stroke="#3a3a3a" stroke-width="0.8"/></svg>
</div>
</body>
</html>
